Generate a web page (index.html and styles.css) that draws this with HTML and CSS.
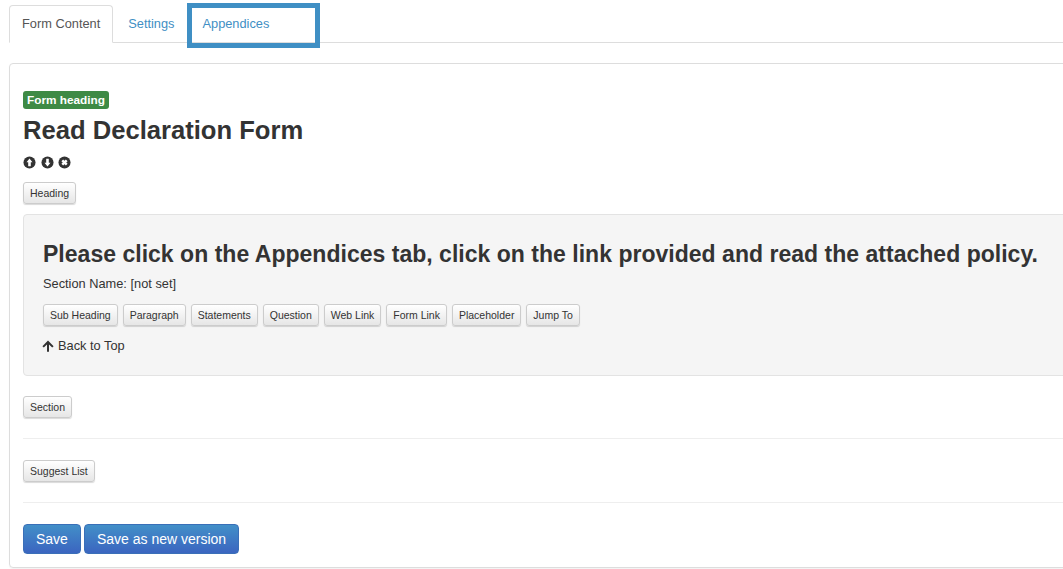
FILE: index.html
```html
<!DOCTYPE html>
<html lang="en">
<head>
    <meta charset="UTF-8">
    <title>Form Content</title>
    <link rel="stylesheet" href="styles.css">
</head>
<body>
    <ul class="tabs">
        <li class="tab active"><a href="#">Form Content</a></li>
        <li class="tab"><a href="#">Settings</a></li>
        <li class="tab"><a href="#">Appendices</a></li>
    </ul>
    <div class="highlight"></div>

    <div class="panel">
        <span class="label">Form heading</span>
        <h1 class="title">Read Declaration Form</h1>
        <div class="icons">
            <svg viewBox="0 0 14 14" width="13" height="13"><circle cx="7" cy="7" r="6.5" fill="#333"/><path d="M7 2.8 10.2 6.6H8.4V11H5.6V6.6H3.8Z" fill="#fff"/></svg>
            <svg viewBox="0 0 14 14" width="13" height="13"><circle cx="7" cy="7" r="6.5" fill="#333"/><path d="M7 11.2 3.8 7.4H5.6V3H8.4V7.4H10.2Z" fill="#fff"/></svg>
            <svg viewBox="0 0 14 14" width="13" height="13"><circle cx="7" cy="7" r="6.5" fill="#333"/><path d="M4.6 4.6 9.4 9.4M9.4 4.6 4.6 9.4" stroke="#fff" stroke-width="2.6"/></svg>
        </div>
        <div class="heading-row"><button class="btn">Heading</button></div>

        <div class="well">
            <h2 class="well-title">Please click on the Appendices tab, click on the link provided and read the attached policy.</h2>
            <p class="section-name">Section Name: [not set]</p>
            <div class="btn-row">
                <button class="btn">Sub Heading</button>
                <button class="btn">Paragraph</button>
                <button class="btn">Statements</button>
                <button class="btn">Question</button>
                <button class="btn">Web Link</button>
                <button class="btn">Form Link</button>
                <button class="btn">Placeholder</button>
                <button class="btn">Jump To</button>
            </div>
            <a class="back-top" href="#">
                <svg viewBox="0 0 12 12" width="12" height="12"><path d="M6 .6 11.6 6.2 10.2 7.6 7 4.5V11.8H5V4.5L1.8 7.6.4 6.2Z" fill="#333"/></svg>
                Back to Top
            </a>
        </div>

        <div class="add-row"><button class="btn">Section</button></div>
        <hr class="divider">
        <div class="add-row list-row"><button class="btn">Suggest List</button></div>
        <hr class="divider">
        <div class="actions">
            <button class="btn-save">Save</button>
            <button class="btn-save">Save as new version</button>
        </div>
    </div>
</body>
</html>
```

FILE: styles.css
```css
html, body {
    overflow: hidden;
}
body {
    margin: 0;
    padding: 5px 0 0 9px;
    width: 1180px;
    height: 564px;
    background-color: #fff;
    font-family: "Liberation Sans", Arial, sans-serif;
    font-size: 14px;
    color: #333;
    position: relative;
}
.tabs {
    display: flex;
    margin: 0;
    padding: 0;
    list-style: none;
    border-bottom: 1px solid #ddd;
    height: 37px;
}
.tab {
    margin-right: 2px;
}
.tab a {
    display: block;
    height: 38px;
    box-sizing: border-box;
    padding: 9px 12px;
    border: 1px solid transparent;
    border-radius: 4px 4px 0 0;
    color: #3f8fc4;
    text-decoration: none;
    font-size: 12.8px;
    line-height: 18px;
}
.tab.active a {
    color: #555;
    background-color: #fff;
    border-color: #ddd #ddd #fff;
}
.highlight {
    position: absolute;
    left: 187px;
    top: 3px;
    width: 123px;
    height: 35px;
    border: 5px solid #3f8fc4;
}
.panel {
    margin-top: 20px;
    height: 505px;
    box-sizing: border-box;
    padding: 27px 13px 0;
    border: 1px solid #ddd;
    border-radius: 4px;
    box-shadow: 0 1px 1px rgba(0, 0, 0, 0.05);
}
.label {
    display: block;
    width: fit-content;
    height: 18px;
    padding: 0 4px;
    border-radius: 3px;
    background-color: #3e8a45;
    color: #fff;
    font-size: 11.8px;
    font-weight: bold;
    line-height: 18px;
}
.title {
    margin: 6px 0 0;
    font-size: 25.6px;
    line-height: 30px;
    font-weight: bold;
}
.icons {
    display: flex;
    align-items: center;
    gap: 4.5px;
    margin-top: 10px;
    height: 14px;
}
.heading-row {
    margin-top: 13px;
}
.btn {
    display: block;
    height: 22px;
    margin: 0;
    padding: 0 6px;
    border: 1px solid #ccc;
    border-radius: 3px;
    background: linear-gradient(#fff, #e6e6e6);
    box-shadow: 0 1px 1px rgba(0, 0, 0, 0.15);
    color: #333;
    font-family: inherit;
    font-size: 10.5px;
    line-height: 20px;
}
.well {
    margin-top: 10px;
    height: 162px;
    box-sizing: border-box;
    padding: 24px 19px 0;
    background-color: #f5f5f5;
    border: 1px solid #e3e3e3;
    border-radius: 4px;
}
.well-title {
    margin: 0;
    font-size: 23px;
    line-height: 30px;
    font-weight: bold;
    letter-spacing: 0.02px;
    white-space: nowrap;
}
.section-name {
    margin: 6px 0 0;
    font-size: 12.8px;
    line-height: 18px;
}
.btn-row {
    display: flex;
    gap: 4.96px;
    margin-top: 11px;
}
.back-top {
    display: flex;
    align-items: center;
    gap: 3px;
    margin-top: 11px;
    margin-left: -1px;
    color: #333;
    text-decoration: none;
    font-size: 12.8px;
    line-height: 18px;
}
.back-top svg {
    flex: none;
    margin-right: 1px;
}
.add-row {
    margin-top: 20px;
}
.list-row {
    margin-top: 21px;
}
.divider {
    margin: 20px 0 0;
    border: 0;
    border-top: 1px solid #eee;
}
.actions {
    display: flex;
    gap: 3px;
    margin-top: 21px;
}
.btn-save {
    height: 30px;
    padding: 0 12px;
    border: 1px solid #3a6fb8;
    border-radius: 4px;
    background: linear-gradient(#428fc8, #3b65c0);
    color: #fff;
    font-family: inherit;
    font-size: 14px;
}
```
